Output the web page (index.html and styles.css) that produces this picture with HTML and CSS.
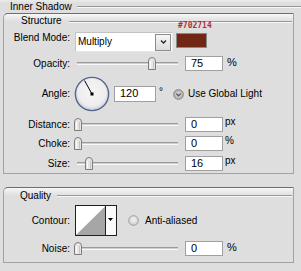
FILE: index.html
```html
<!DOCTYPE html>
<html>
<head>
<meta charset="utf-8">
<link rel="stylesheet" href="styles.css">
</head>
<body>
<div class="panel">
  <div class="title-row"><span class="title">Inner Shadow</span><span class="rule"></span></div>

  <section class="group structure">
    <div class="group-head"><span class="group-title">Structure</span><span class="rule rule-structure"></span></div>

    <div class="blend-row">
      <span class="lbl lbl-blend">Blend Mode:</span>
      <div class="select">
        <span class="select-value">Multiply</span>
        <span class="select-btn"><svg width="7" height="4" viewBox="0 0 7 4"><path d="M1 0.5 L3.5 3 L6 0.5" fill="none" stroke="#222" stroke-width="1.3"/></svg></span>
      </div>
      <div class="swatch-col">
        <div class="hex">#702714</div>
        <div class="swatch"></div>
      </div>
    </div>

    <div class="row row-opacity">
      <span class="lbl">Opacity:</span>
      <div class="slider"><span class="track"></span><span class="thumb" style="left:74px"><svg width="8" height="13" viewBox="0 0 8 13"><path d="M0.5 12.5 V4 Q0.5 0.5 4 0.5 Q7.5 0.5 7.5 4 V12.5 Z" fill="#e6e6e6" stroke="#7c7c7c"/><path d="M2.5 4 V11.5" stroke="#fafafa"/><path d="M5.5 4 V11.5" stroke="#c4c4c4"/></svg></span></div>
      <div class="field">75</div>
      <span class="unit">%</span>
    </div>

    <div class="row row-angle">
      <span class="lbl">Angle:</span>
      <div class="dial">
        <svg width="36" height="36" viewBox="0 0 36 36">
          <defs>
            <radialGradient id="dg" cx="50%" cy="45%" r="55%">
              <stop offset="0" stop-color="#f6f6f6"/>
              <stop offset="0.75" stop-color="#eeeeee"/>
              <stop offset="1" stop-color="#c9ccd2"/>
            </radialGradient>
          </defs>
          <circle cx="18" cy="18" r="16.6" fill="url(#dg)" stroke="#55688f" stroke-width="1.4"/>
          <line x1="18" y1="18" x2="10.5" y2="4.5" stroke="#000" stroke-width="1"/>
          <rect x="16.5" y="16.5" width="3" height="3" fill="#000"/>
        </svg>
      </div>
      <div class="field field-angle">120</div>
      <span class="deg">°</span>
      <span class="radio radio-on"><svg width="11" height="11" viewBox="0 0 11 11"><defs><radialGradient id="rg" cx="50%" cy="50%" r="50%"><stop offset="0" stop-color="#dadada"/><stop offset="0.6" stop-color="#c4c4c4"/><stop offset="1" stop-color="#8e8e8e"/></radialGradient></defs><circle cx="5.5" cy="5.5" r="5" fill="url(#rg)" stroke="#9a9a9a"/><path d="M3.3 4.6 L5.5 6.8 L7.7 4.6" fill="none" stroke="#555" stroke-width="1.3"/></svg></span>
      <span class="radio-text">Use Global Light</span>
    </div>

    <div class="row row-distance">
      <span class="lbl">Distance:</span>
      <div class="slider"><span class="track"></span><span class="thumb" style="left:0px"><svg width="8" height="13" viewBox="0 0 8 13"><path d="M0.5 12.5 V4 Q0.5 0.5 4 0.5 Q7.5 0.5 7.5 4 V12.5 Z" fill="#e6e6e6" stroke="#7c7c7c"/><path d="M2.5 4 V11.5" stroke="#fafafa"/><path d="M5.5 4 V11.5" stroke="#c4c4c4"/></svg></span></div>
      <div class="field">0</div>
      <span class="unit unit-px">px</span>
    </div>

    <div class="row row-choke">
      <span class="lbl">Choke:</span>
      <div class="slider"><span class="track"></span><span class="thumb" style="left:0px"><svg width="8" height="13" viewBox="0 0 8 13"><path d="M0.5 12.5 V4 Q0.5 0.5 4 0.5 Q7.5 0.5 7.5 4 V12.5 Z" fill="#e6e6e6" stroke="#7c7c7c"/><path d="M2.5 4 V11.5" stroke="#fafafa"/><path d="M5.5 4 V11.5" stroke="#c4c4c4"/></svg></span></div>
      <div class="field">0</div>
      <span class="unit unit-px">%</span>
    </div>

    <div class="row row-size">
      <span class="lbl">Size:</span>
      <div class="slider"><span class="track"></span><span class="thumb" style="left:11px"><svg width="8" height="13" viewBox="0 0 8 13"><path d="M0.5 12.5 V4 Q0.5 0.5 4 0.5 Q7.5 0.5 7.5 4 V12.5 Z" fill="#e6e6e6" stroke="#7c7c7c"/><path d="M2.5 4 V11.5" stroke="#fafafa"/><path d="M5.5 4 V11.5" stroke="#c4c4c4"/></svg></span></div>
      <div class="field">16</div>
      <span class="unit unit-px">px</span>
    </div>
  </section>

  <section class="group quality">
    <div class="group-head group-head-quality"><span class="group-title">Quality</span><span class="rule rule-quality"></span></div>

    <div class="row row-contour">
      <span class="lbl">Contour:</span>
      <div class="contour">
        <svg width="42" height="31" viewBox="0 0 42 31">
          <rect x="0.5" y="0.5" width="41" height="30" fill="#fafafa" stroke="#1e1e1e"/>
          <rect x="1" y="1" width="29.5" height="29" fill="#ffffff"/>
          <polygon points="1,30 30.5,1 30.5,30" fill="#a6a6a6"/>
          <line x1="30.5" y1="1" x2="30.5" y2="30" stroke="#1e1e1e"/>
          <polygon points="33,13 38,13 35.5,16" fill="#000"/>
        </svg>
      </div>
      <span class="radio radio-off"><svg width="11" height="11" viewBox="0 0 11 11"><defs><radialGradient id="rg2" cx="50%" cy="40%" r="55%"><stop offset="0" stop-color="#f2f2f2"/><stop offset="1" stop-color="#d2d2d2"/></radialGradient></defs><circle cx="5.5" cy="5.5" r="4.8" fill="url(#rg2)" stroke="#9c9c9c"/></svg></span>
      <span class="radio-text radio-text-aa">Anti-aliased</span>
    </div>

    <div class="row row-noise">
      <span class="lbl">Noise:</span>
      <div class="slider"><span class="track"></span><span class="thumb" style="left:0px"><svg width="8" height="13" viewBox="0 0 8 13"><path d="M0.5 12.5 V4 Q0.5 0.5 4 0.5 Q7.5 0.5 7.5 4 V12.5 Z" fill="#e6e6e6" stroke="#7c7c7c"/><path d="M2.5 4 V11.5" stroke="#fafafa"/><path d="M5.5 4 V11.5" stroke="#c4c4c4"/></svg></span></div>
      <div class="field">0</div>
      <span class="unit">%</span>
    </div>
  </section>
</div>
</body>
</html>
```

FILE: styles.css
```css
* {
  box-sizing: border-box;
  margin: 0;
  padding: 0;
}

html,
body {
  background: #dedede;
}

body {
  width: 301px;
  height: 271px;
  overflow: hidden;
  font: 10px/12px "Liberation Sans", Arial, sans-serif;
  color: #000;
}

.panel {
  padding-top: 1px;
  background: linear-gradient(#ececec, #dedede 3px);
}

.title-row {
  display: flex;
  align-items: center;
  height: 12px;
  padding-left: 10px;
}

.rule {
  flex: 1;
  height: 2px;
  border-top: 1px solid #979797;
  border-bottom: 1px solid #f7f7f7;
}

.title-row .rule {
  margin-left: 5px;
}

.group {
  margin-left: 3px;
  width: 291px;
  border: 1px solid #a2a2a2;
  border-top-color: #6e6e6e;
  border-top-left-radius: 5px;
  background: linear-gradient(#f7f7f7, #e6e6e6 5px, #dedede 8px);
}

.structure {
  height: 161px;
}

.quality {
  height: 76px;
  margin-top: 13px;
}

.group-head {
  display: flex;
  align-items: flex-start;
  height: 7px;
  margin-top: 1px;
  padding-left: 17px;
}

.rule-structure {
  margin-top: 6px;
  margin-left: 7px;
  margin-right: 1px;
}

.group-head-quality {
  align-items: center;
  height: 12px;
  margin-top: 2px;
  padding-left: 16px;
}

.rule-quality {
  margin-left: 6px;
  margin-right: 1px;
}

.lbl {
  flex: none;
  width: 66px;
  text-align: right;
}

/* Blend row */
.blend-row {
  display: flex;
  align-items: flex-start;
  height: 30px;
}

.lbl-blend {
  margin-top: 10px;
}

.select {
  display: flex;
  align-items: center;
  margin-top: 10px;
  margin-left: 5px;
  width: 98px;
  height: 20px;
  padding: 0 1px 0 2px;
  background: #fff;
  border: 1px solid #c2c2c2;
  border-right-color: #e8e8e8;
  border-bottom-color: #e8e8e8;
}

.select-value {
  flex: 1;
  font-size: 10px;
}

.select-btn {
  display: flex;
  align-items: center;
  justify-content: center;
  width: 16px;
  height: 17px;
  border: 1px solid #8c8c8c;
  background: linear-gradient(#f6f6f6, #dcdcdc);
}

.swatch-col {
  margin-left: 3px;
}

.hex {
  padding-left: 2px;
  font: bold 8px/8px "DejaVu Sans Mono", monospace;
  color: #b0303a;
}

.swatch {
  margin-top: 3px;
  width: 31px;
  height: 15px;
  background: #702714;
  border: 1px solid #8a8a8a;
}

/* Generic rows */
.row {
  display: flex;
  align-items: center;
  height: 15px;
}

.row-opacity {
  margin-top: 4px;
}

.row-angle {
  margin-top: 5px;
  height: 36px;
}

.row-distance {
  margin-top: 5px;
}

.row-choke {
  margin-top: 4px;
}

.row-size {
  margin-top: 5px;
}

.slider {
  position: relative;
  flex: none;
  margin-left: 4px;
  width: 104px;
  height: 15px;
}

.track {
  position: absolute;
  left: 3px;
  top: 6px;
  width: 101px;
  height: 3px;
  border-top: 1px solid #9a9a9a;
  background: #cfcfcf;
  border-bottom: 1px solid #f8f8f8;
}

.thumb {
  position: absolute;
  top: 1px;
  width: 8px;
  height: 13px;
  display: block;
}

.thumb svg {
  display: block;
}

.field {
  flex: none;
  margin-left: 7px;
  width: 38px;
  height: 15px;
  padding-left: 5px;
  background: #fff;
  border: 1px solid #a0a0a0;
  font-size: 11px;
  line-height: 13px;
}

.unit {
  margin-left: 4px;
  font-size: 11px;
  align-self: flex-start;
  line-height: 12px;
}

.unit-px {
  margin-left: 2px;
  font-size: 10px;
  line-height: 10px;
}

.dial {
  flex: none;
  margin-left: 4px;
  width: 36px;
  height: 36px;
}

.dial svg {
  display: block;
}

.field-angle {
  margin-left: 4px;
  width: 42px;
  height: 16px;
}

.deg {
  margin-left: 3px;
  align-self: flex-start;
  margin-top: 10px;
  font-size: 10px;
}

.radio {
  flex: none;
  display: block;
  width: 11px;
  height: 11px;
}

.radio svg {
  display: block;
}

.radio-on {
  margin-left: 10px;
}

.radio-text {
  margin-left: 4px;
}

/* Quality */
.row-contour {
  margin-top: 3px;
  height: 31px;
}

.contour {
  flex: none;
  margin-left: 5px;
  width: 42px;
  height: 31px;
}

.contour svg {
  display: block;
}

.radio-off {
  margin-left: 11px;
}

.radio-text-aa {
  margin-left: 6px;
}

.row-noise {
  margin-top: 5px;
}
```
